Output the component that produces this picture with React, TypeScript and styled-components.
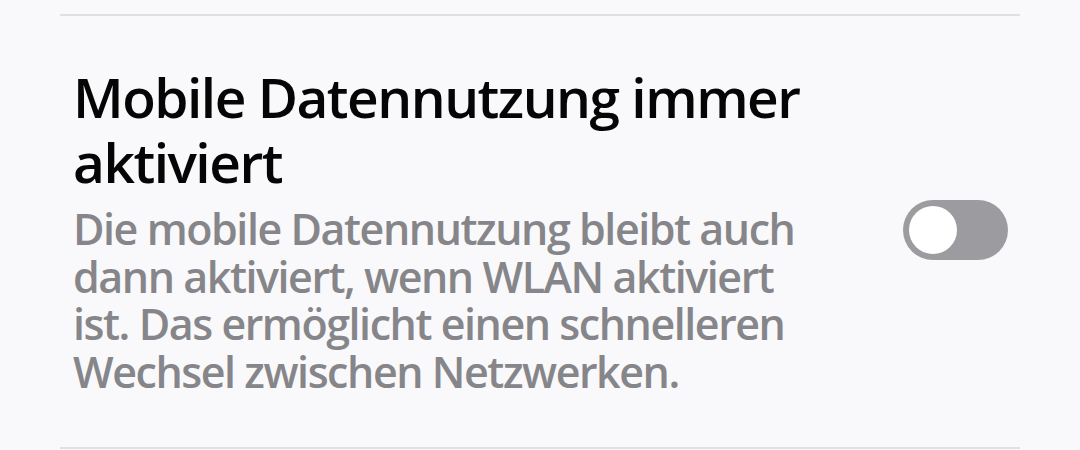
import React from "react";
import styled, { createGlobalStyle } from "styled-components";

const Global = createGlobalStyle`
  html, body {
    margin: 0;
    padding: 0;
    background: #f9f9fb;
  }
  body {
    font-family: "Open Sans", "Noto Sans", sans-serif;
  }
`;

const Page = styled.div`
  width: 1080px;
  height: 450px;
  box-sizing: border-box;
  padding: 14px 60px 0;
  background: #f9f9fb;
  overflow: hidden;
`;

const Divider = styled.div`
  height: 2px;
  background: #e0e0e3;
`;

const Row = styled.div`
  display: flex;
  align-items: center;
  justify-content: space-between;
  padding: 48px 12px 52px 13px;
`;

const TextCol = styled.div`
  display: flex;
  flex-direction: column;
  gap: 11px;
  width: 760px;
`;

const Title = styled.div`
  font-size: 55px;
  line-height: 65px;
  font-weight: 600;
  color: #050505;
  letter-spacing: -1.5px;
`;

const Description = styled.div`
  font-size: 43px;
  line-height: 47.5px;
  font-weight: 600;
  color: #86868a;
  letter-spacing: -1.45px;
`;

const Switch = styled.button<{ $on: boolean }>`
  flex: none;
  width: 105px;
  height: 60px;
  border: none;
  border-radius: 30px;
  padding: 6px;
  background: #9c9ca0;
  display: flex;
  justify-content: ${(p) => (p.$on ? "flex-end" : "flex-start")};
  align-items: center;
  cursor: pointer;
`;

const Thumb = styled.span`
  width: 48px;
  height: 48px;
  border-radius: 50%;
  background: #ffffff;
`;

export default function App() {
  const [on, setOn] = React.useState(false);
  return (
    <Page>
      <Global />
      <Divider />
      <Row>
        <TextCol>
          <Title>Mobile Datennutzung immer aktiviert</Title>
          <Description>
            Die mobile Datennutzung bleibt auch dann aktiviert, wenn WLAN aktiviert
            ist. Das ermöglicht einen schnelleren Wechsel zwischen Netzwerken.
          </Description>
        </TextCol>
        <Switch $on={on} onClick={() => setOn(!on)} aria-label="Mobile Datennutzung immer aktiviert">
          <Thumb />
        </Switch>
      </Row>
      <Divider />
    </Page>
  );
}
